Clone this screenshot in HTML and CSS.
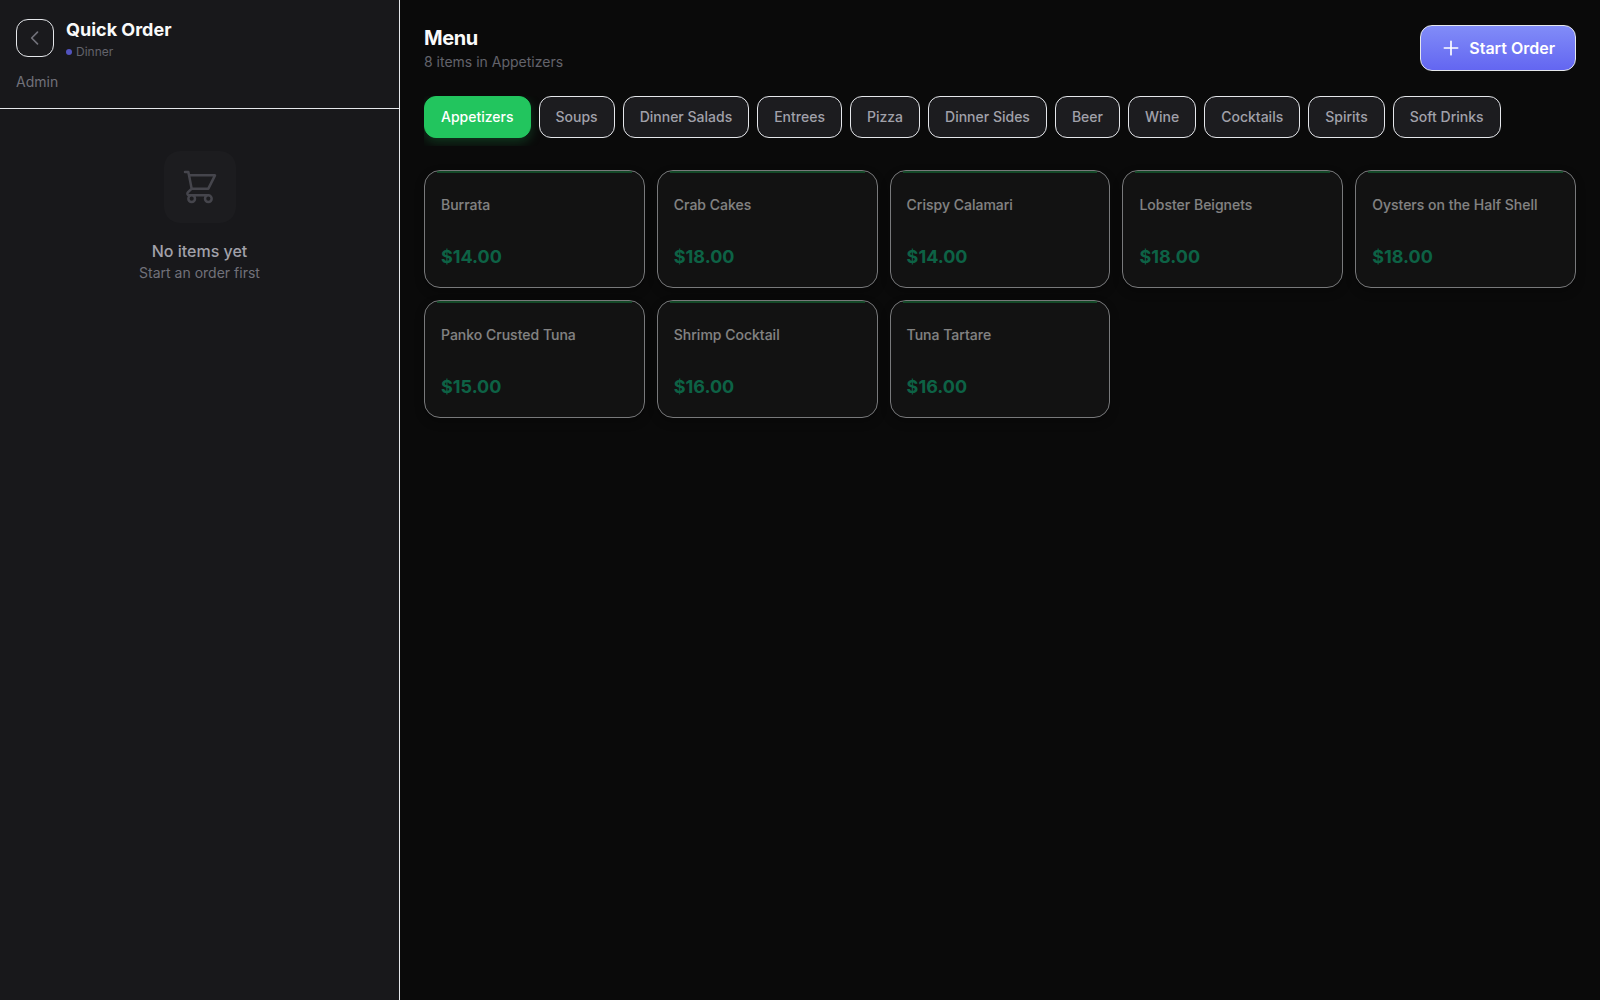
FILE: index.html
```html
<!DOCTYPE html>
<html lang="en">
<head>
<meta charset="utf-8">
<title>Quick Order</title>
<link rel="stylesheet" href="styles.css">
</head>
<body>
<div class="app">
  <aside class="sidebar">
    <header class="side-header">
      <div class="side-top">
        <button class="back" aria-label="Back">
          <svg width="20" height="20" viewBox="0 0 24 24" fill="none" stroke="currentColor" stroke-width="2" stroke-linecap="round" stroke-linejoin="round"><path d="M15 19l-7-7 7-7"/></svg>
        </button>
        <div>
          <h1 class="side-title">Quick Order</h1>
          <div class="shift"><span class="dot"></span>Dinner</div>
        </div>
      </div>
      <div class="user">Admin</div>
    </header>
    <div class="empty">
      <div class="empty-icon">
        <svg width="40" height="40" viewBox="0 0 24 24" fill="none" stroke="currentColor" stroke-width="1.5" stroke-linecap="round" stroke-linejoin="round"><path d="M3 3h2l.4 2M7 13h10l4-8H5.4M7 13L5.4 5M7 13l-2.293 2.293c-.63.63-.184 1.707.707 1.707H17m0 0a2 2 0 100 4 2 2 0 000-4zm-8 2a2 2 0 11-4 0 2 2 0 014 0z"/></svg>
      </div>
      <div class="empty-title">No items yet</div>
      <div class="empty-text">Start an order first</div>
    </div>
  </aside>
  <main class="main">
    <header class="menu-header">
      <div>
        <h2 class="menu-title">Menu</h2>
        <div class="menu-count">8 items in Appetizers</div>
      </div>
      <button class="start">
        <svg width="20" height="20" viewBox="0 0 24 24" fill="none" stroke="currentColor" stroke-width="2" stroke-linecap="round"><path d="M12 4v16m8-8H4"/></svg>
        Start Order
      </button>
    </header>
    <nav class="tabs">
      <button class="tab active">Appetizers</button>
      <button class="tab">Soups</button>
      <button class="tab">Dinner Salads</button>
      <button class="tab">Entrees</button>
      <button class="tab">Pizza</button>
      <button class="tab">Dinner Sides</button>
      <button class="tab">Beer</button>
      <button class="tab">Wine</button>
      <button class="tab">Cocktails</button>
      <button class="tab">Spirits</button>
      <button class="tab">Soft Drinks</button>
    </nav>
    <section class="grid">
      <article class="card"><div class="name">Burrata</div><div class="price">$14.00</div></article>
      <article class="card"><div class="name">Crab Cakes</div><div class="price">$18.00</div></article>
      <article class="card"><div class="name">Crispy Calamari</div><div class="price">$14.00</div></article>
      <article class="card"><div class="name">Lobster Beignets</div><div class="price">$18.00</div></article>
      <article class="card"><div class="name">Oysters on the Half Shell</div><div class="price">$18.00</div></article>
      <article class="card"><div class="name">Panko Crusted Tuna</div><div class="price">$15.00</div></article>
      <article class="card"><div class="name">Shrimp Cocktail</div><div class="price">$16.00</div></article>
      <article class="card"><div class="name">Tuna Tartare</div><div class="price">$16.00</div></article>
    </section>
  </main>
</div>
</body>
</html>
```
FILE: styles.css
```css
* { box-sizing: border-box; }
body {
  margin: 0;
  background: #0a0a0a;
  color: #fafafa;
  font-family: Inter, "Liberation Sans", sans-serif;
}
h1, h2 { margin: 0; }
button { font: inherit; margin: 0; }
svg { display: block; flex: none; }

.app { display: flex; height: 100vh; overflow: hidden; }

.sidebar {
  width: 400px;
  flex: none;
  background: #18181b;
  border-right: 1px solid #e5e7eb;
}
.side-header {
  height: 109px;
  padding: 16px;
  border-bottom: 1px solid #e5e7eb;
}
.side-top { display: flex; align-items: center; gap: 12px; height: 44px; }
.back {
  width: 38px;
  height: 38px;
  padding: 0;
  display: flex;
  align-items: center;
  justify-content: center;
  background: #1a1a1d;
  color: #71717a;
  border: 1px solid #e5e7eb;
  border-radius: 12px;
}
.side-title {
  font-size: 18px;
  line-height: 28px;
  font-weight: 700;
}
.shift {
  display: flex;
  align-items: center;
  gap: 4px;
  font-size: 12px;
  line-height: 16px;
  color: #63636b;
}
.dot { width: 6px; height: 6px; border-radius: 50%; background: #5253be; }
.user { margin-top: 12px; font-size: 14px; line-height: 20px; color: #71717a; }

.empty {
  display: flex;
  flex-direction: column;
  align-items: center;
  padding-top: 42px;
}
.empty-icon {
  width: 72px;
  height: 72px;
  display: flex;
  align-items: center;
  justify-content: center;
  background: #1c1c1f;
  color: #45454c;
  border-radius: 16px;
}
.empty-title {
  margin-top: 16px;
  font-size: 16px;
  line-height: 24px;
  font-weight: 500;
  color: #a1a1aa;
}
.empty-text { font-size: 14px; line-height: 20px; color: #71717a; }

.main { flex: 1; min-width: 0; padding: 24px; }
.menu-header {
  display: flex;
  align-items: center;
  justify-content: space-between;
  height: 48px;
}
.menu-title {
  font-size: 20px;
  line-height: 28px;
  font-weight: 700;
  letter-spacing: -0.02em;
}
.menu-count { font-size: 14px; line-height: 20px; color: #63636b; }
.start {
  display: flex;
  align-items: center;
  gap: 8px;
  height: 46px;
  padding: 0 20px;
  font-size: 16px;
  font-weight: 600;
  color: #fff;
  background: linear-gradient(180deg, #818cf8, #6366f1);
  border: 1px solid #e5e7eb;
  border-radius: 12px;
}

.tabs {
  display: flex;
  gap: 8px;
  margin-top: 24px;
  padding-bottom: 8px;
  overflow: hidden;
}
.tab {
  height: 42px;
  padding: 0 16px;
  font-size: 14px;
  line-height: 20px;
  font-weight: 500;
  white-space: nowrap;
  color: #a1a1aa;
  background: #1c1c1f;
  border: 1px solid #e5e7eb;
  border-radius: 12px;
}
.tab.active {
  color: #fff;
  background: #22c55e;
  border-color: #22c55e;
  box-shadow: 0 4px 12px rgba(34, 197, 94, 0.25);
}

.grid {
  display: grid;
  grid-template-columns: repeat(5, 1fr);
  gap: 12px;
  margin-top: 24px;
}
.card {
  position: relative;
  height: 118px;
  padding: 24px 16px 0;
  background: #1a1a1a;
  border: 1px solid #e5e7eb;
  border-radius: 16px;
  opacity: 0.5;
  overflow: hidden;
  box-shadow: 0 4px 10px rgba(0, 0, 0, 0.25);
}
/* category accent along the top edge */
.card::before {
  content: "";
  position: absolute;
  top: 0;
  left: 12px;
  right: 12px;
  height: 2px;
  background: #22c55e;
  opacity: 0.65;
}
.name { font-size: 14px; line-height: 20px; font-weight: 500; }
.price {
  margin-top: 28px;
  font-size: 18px;
  line-height: 28px;
  font-weight: 700;
  color: #10b981;
}
```
